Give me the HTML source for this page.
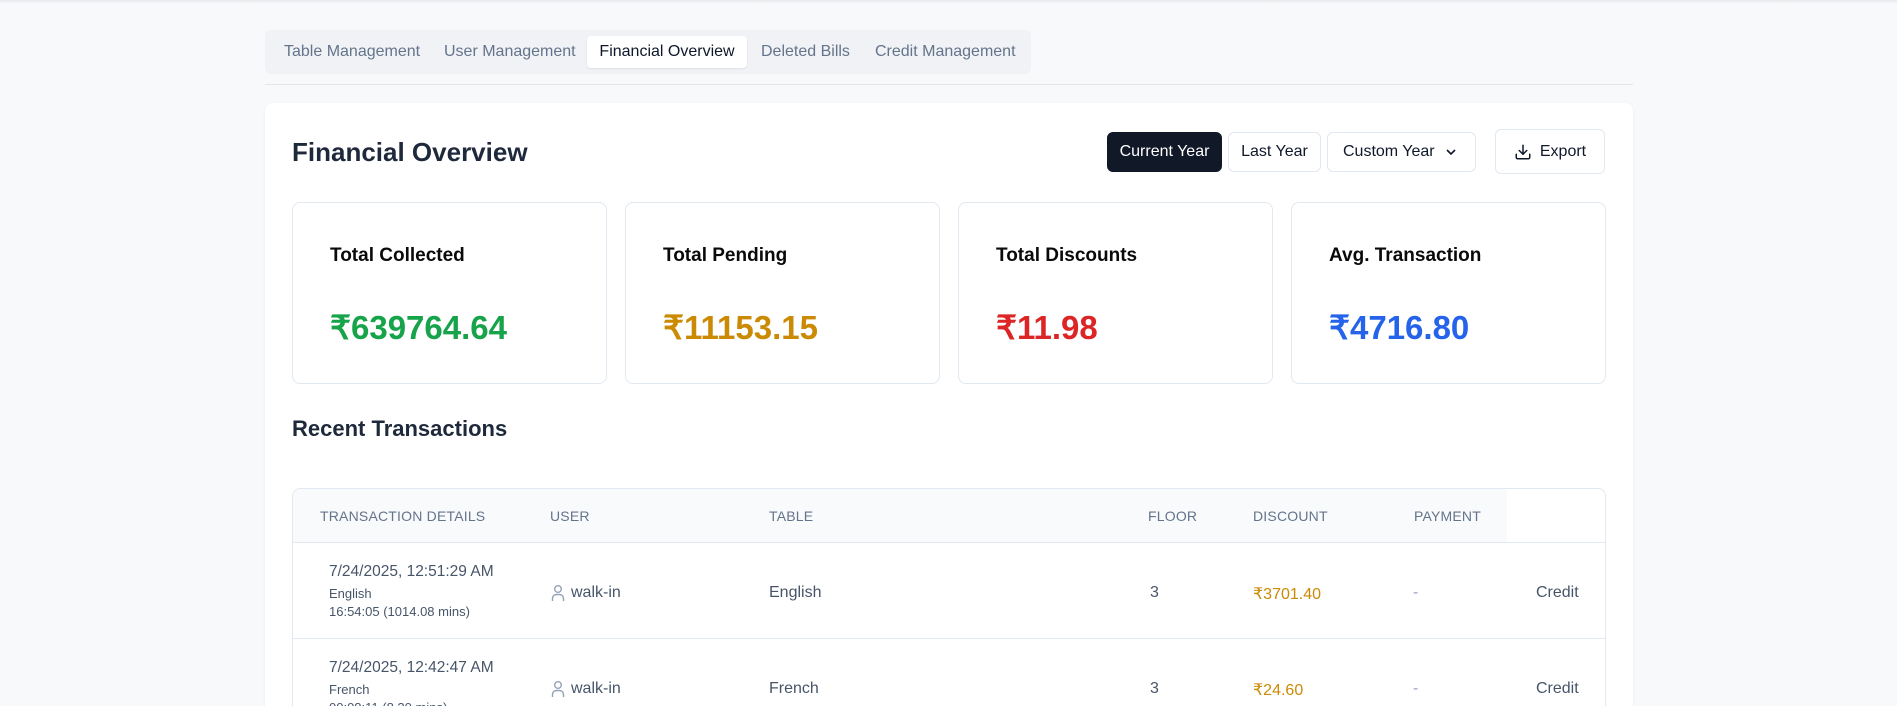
<!DOCTYPE html>
<html style="overflow:hidden;height:706px"><head><meta charset="utf-8"><style>
*{box-sizing:border-box;margin:0;padding:0}
body{width:1897px;height:706px;overflow:hidden;background:#f8f9fb;font-family:"Liberation Sans",Arial,sans-serif;position:relative}
.topbar{position:absolute;left:0;top:0;width:1897px;height:4px;background:linear-gradient(#e8eaee,#f8f9fb)}
.tabs{position:absolute;left:265px;top:30px;width:766px;height:44px;background:#f0f2f6;border-radius:6px}
.tab{position:absolute;top:6px;height:32px;line-height:32px;font-size:16px;color:#64748b;padding:0 0}
.tab.act{background:#fff;color:#0f172a;border-radius:4px;box-shadow:0 1px 2px rgba(0,0,0,.08)}
.div{position:absolute;left:265px;top:84px;width:1368px;height:1px;background:#e2e5ea}
.card{position:absolute;left:265px;top:103px;width:1368px;height:603px;overflow:hidden;background:#fff;border-radius:8px 8px 0 0;box-shadow:0 1px 3px rgba(0,0,0,.06)}
.abs{position:absolute}
h1{position:absolute;left:27px;top:34px;font-size:26px;font-weight:bold;color:#1e293b}
.btn{position:absolute;height:40px;line-height:38px;border:1px solid #e2e8f0;border-radius:6px;font-size:16px;color:#0f172a;background:#fff;text-align:center}
.stat{position:absolute;top:99px;width:315px;height:182px;border:1px solid #e2e8f0;border-radius:8px}
.stat .l{position:absolute;left:37px;top:42px;font-size:19px;font-weight:bold;color:#0a0a0a}
.stat .v{position:absolute;left:37px;top:105px;font-size:33px;font-weight:bold}
.tbl{position:absolute;left:27px;top:385px;width:1314px;height:240px;border:1px solid #e2e8f0;border-radius:8px;overflow:hidden}
.th{position:absolute;top:0;left:0;width:1214px;height:54px;background:#f8fafc;border-bottom:1px solid #e2e8f0}
.thb{position:absolute;top:53px;left:0;width:1314px;height:1px;background:#e2e8f0}
.h{position:absolute;top:19px;font-size:14px;color:#64748b;letter-spacing:.2px}
.c{position:absolute;font-size:16px;color:#475569}
.s{position:absolute;font-size:13px;color:#475569}
.rowline{position:absolute;left:0;width:1314px;height:1px;background:#e2e8f0}
</style></head><body>
<div class="topbar"></div>
<div class="tabs">
<div class="tab" style="left:19px">Table Management</div>
<div class="tab" style="left:179px">User Management</div>
<div class="tab act" style="left:322px;width:160px;text-align:center">Financial Overview</div>
<div class="tab" style="left:496px">Deleted Bills</div>
<div class="tab" style="left:610px">Credit Management</div>
</div>
<div class="div"></div>
<div class="card">
<h1>Financial Overview</h1>
<div class="btn" style="left:842px;top:29px;width:115px;background:#111827;color:#fff;border-color:#111827">Current Year</div>
<div class="btn" style="left:963px;top:29px;width:93px">Last Year</div>
<div class="btn" style="left:1062px;top:29px;width:149px;text-align:left;padding-left:15px">Custom Year<svg style="position:absolute;right:18px;top:14px" width="12" height="10" viewBox="0 0 12 10"><path d="M2 3l4 4 4-4" fill="none" stroke="#0f172a" stroke-width="1.6"/></svg></div>
<div class="btn" style="left:1230px;top:26px;width:110px;height:45px;line-height:43px;padding-left:26px">Export<svg style="position:absolute;left:18px;top:13px" width="18" height="18" viewBox="0 0 24 24" fill="none" stroke="#0f172a" stroke-width="2" stroke-linecap="round" stroke-linejoin="round"><path d="M21 15v4a2 2 0 0 1-2 2H5a2 2 0 0 1-2-2v-4"/><path d="M7 10l5 5 5-5"/><path d="M12 15V3"/></svg></div>
<div class="stat" style="left:27px"><div class="l">Total Collected</div><div class="v" style="color:#16a34a">₹639764.64</div></div>
<div class="stat" style="left:360px"><div class="l">Total Pending</div><div class="v" style="color:#ca8a04">₹11153.15</div></div>
<div class="stat" style="left:693px"><div class="l">Total Discounts</div><div class="v" style="color:#dc2626">₹11.98</div></div>
<div class="stat" style="left:1026px"><div class="l">Avg. Transaction</div><div class="v" style="color:#2563eb">₹4716.80</div></div>
<div class="abs" style="left:27px;top:313px;font-size:22px;font-weight:bold;color:#1e293b">Recent Transactions</div>
<div class="tbl">
<div class="th"></div><div class="thb"></div>
<div class="h" style="left:27px">TRANSACTION DETAILS</div>
<div class="h" style="left:257px">USER</div>
<div class="h" style="left:476px">TABLE</div>
<div class="h" style="left:855px">FLOOR</div>
<div class="h" style="left:960px">DISCOUNT</div>
<div class="h" style="left:1121px">PAYMENT</div>

<div class="c" style="left:36px;top:74px;font-size:15.5px">7/24/2025, 12:51:29 AM</div>
<div class="s" style="left:36px;top:97px">English</div>
<div class="s" style="left:36px;top:115px">16:54:05 (1014.08 mins)</div>
<svg class="abs" style="left:258px;top:95px" width="14" height="18" viewBox="0 0 14 18" fill="none" stroke="#94a3b8" stroke-width="1.4"><circle cx="7" cy="5" r="3.3"/><path d="M1.5 17v-2.5a4 4 0 0 1 4-4h3a4 4 0 0 1 4 4V17"/></svg>
<div class="c" style="left:278px;top:95px">walk-in</div>
<div class="c" style="left:476px;top:95px">English</div>
<div class="c" style="left:857px;top:95px">3</div>
<div class="c" style="left:960px;top:95px;color:#ca8a04">₹3701.40</div>
<div class="c" style="left:1120px;top:95px;color:#94a3b8">-</div>
<div class="c" style="left:1243px;top:95px">Credit</div>
<div class="rowline" style="top:149px"></div>

<div class="c" style="left:36px;top:170px;font-size:15.5px">7/24/2025, 12:42:47 AM</div>
<div class="s" style="left:36px;top:193px">French</div>
<div class="s" style="left:36px;top:211px">00:08:11 (8.20 mins)</div>
<svg class="abs" style="left:258px;top:191px" width="14" height="18" viewBox="0 0 14 18" fill="none" stroke="#94a3b8" stroke-width="1.4"><circle cx="7" cy="5" r="3.3"/><path d="M1.5 17v-2.5a4 4 0 0 1 4-4h3a4 4 0 0 1 4 4V17"/></svg>
<div class="c" style="left:278px;top:191px">walk-in</div>
<div class="c" style="left:476px;top:191px">French</div>
<div class="c" style="left:857px;top:191px">3</div>
<div class="c" style="left:960px;top:191px;color:#ca8a04">₹24.60</div>
<div class="c" style="left:1120px;top:191px;color:#94a3b8">-</div>
<div class="c" style="left:1243px;top:191px">Credit</div>
</div>
</div>
</body></html>
